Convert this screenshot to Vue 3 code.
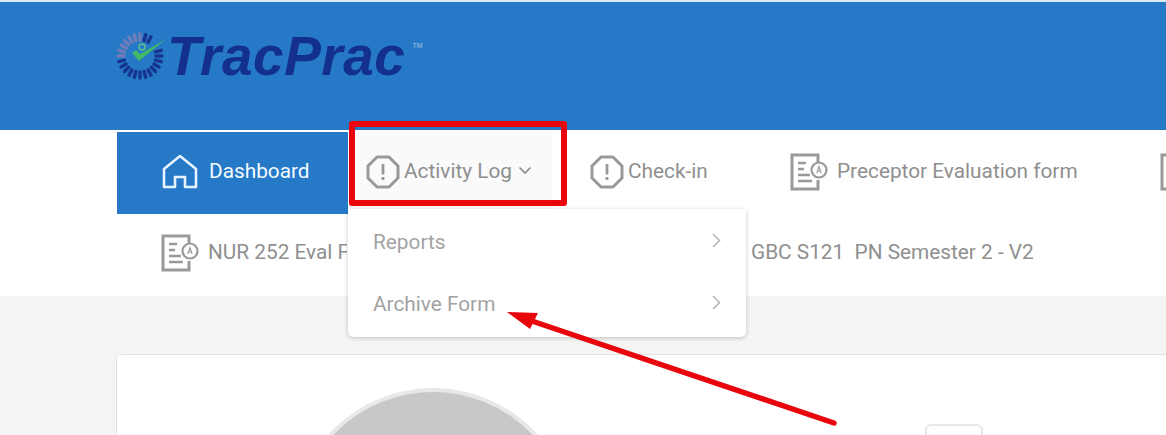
<script setup>
const ticks = Array.from({ length: 24 }, (_, i) => {
  const a = (i * 15 * Math.PI) / 180
  return {
    i,
    x1: 24 + Math.cos(a) * 16,
    y1: 24 + Math.sin(a) * 16,
    x2: 24 + Math.cos(a) * 22,
    y2: 24 + Math.sin(a) * 22,
    // upper left part of the ring fades out
    color: i >= 12 && i <= 18 ? '#6f7cb8' : '#16358f',
  }
}).filter((t) => t.i !== 21 && t.i !== 22)
</script>

<template>
  <div class="page">
    <header class="topbar">
      <div class="logo">
        <svg class="logo-mark" width="48" height="48" viewBox="0 0 48 48">
          <line
            v-for="t in ticks"
            :key="t.i"
            :x1="t.x1"
            :y1="t.y1"
            :x2="t.x2"
            :y2="t.y2"
            :stroke="t.color"
            stroke-width="3.4"
            stroke-linecap="round"
          />
          <circle cx="26" cy="15" r="3" fill="none" stroke="#5fc08a" stroke-width="1.5" />
          <path d="M16 21 L23 29 L50 7 L24 22 L20 18 Z" fill="#3fb86a" />
        </svg>
        <span class="logo-text">TracPrac</span>
        <span class="logo-tm">TM</span>
      </div>
    </header>

    <nav class="nav">
      <div class="nav-row">
        <a class="item item-dash">
          <svg width="36" height="36" viewBox="0 0 36 36" fill="none" stroke="#e6f4ff" stroke-width="2.6" stroke-linejoin="round">
            <path d="M2 15 L18 2 L34 15 V33 H23 V23 H13 V33 H2 Z" />
          </svg>
          <span>Dashboard</span>
        </a>
        <a class="item item-activity">
          <svg class="alert" width="34" height="34" viewBox="0 0 34 34">
            <path d="M11 2 H23 L32 11 V23 L23 32 H11 L2 23 V11 Z" fill="none" stroke="#999" stroke-width="3" stroke-linejoin="round" />
            <rect x="15.6" y="9" width="2.8" height="10.5" fill="#999" />
            <rect x="15.6" y="22" width="2.8" height="3" fill="#999" />
          </svg>
          <span>Activity Log</span>
          <svg class="caret" width="14" height="9" viewBox="0 0 14 9" fill="none" stroke="#8a8a8a" stroke-width="1.6">
            <path d="M1.5 1.5 L7 7 L12.5 1.5" />
          </svg>
        </a>
        <a class="item item-check">
          <svg class="alert" width="34" height="34" viewBox="0 0 34 34">
            <path d="M11 2 H23 L32 11 V23 L23 32 H11 L2 23 V11 Z" fill="none" stroke="#999" stroke-width="3" stroke-linejoin="round" />
            <rect x="15.6" y="9" width="2.8" height="10.5" fill="#999" />
            <rect x="15.6" y="22" width="2.8" height="3" fill="#999" />
          </svg>
          <span>Check-in</span>
        </a>
        <a class="item item-preceptor">
          <svg class="form-icon" width="38" height="38" viewBox="0 0 38 38" fill="none" stroke="#999">
            <path d="M28 9 V2 H2 V36 H28 V27" stroke-width="3" />
            <path d="M8 10 H16 M8 16 H14 M8 22 H20 M8 28 H22" stroke-width="2.6" />
            <circle cx="29" cy="17" r="7.5" stroke-width="2.2" />
            <path d="M26.8 20 L29 13.5 L31.2 20 M27.6 18 H30.4" stroke-width="1.1" />
          </svg>
          <span>Preceptor Evaluation form</span>
        </a>
        <a class="item item-cut">
          <svg class="form-icon" width="38" height="38" viewBox="0 0 38 38" fill="none" stroke="#999">
            <path d="M28 9 V2 H2 V36 H28 V27" stroke-width="3" />
          </svg>
        </a>
      </div>
      <div class="nav-row nav-row-2">
        <a class="item item-nur">
          <svg class="form-icon" width="38" height="38" viewBox="0 0 38 38" fill="none" stroke="#999">
            <path d="M28 9 V2 H2 V36 H28 V27" stroke-width="3" />
            <path d="M8 10 H16 M8 16 H14 M8 22 H20 M8 28 H22" stroke-width="2.6" />
            <circle cx="29" cy="17" r="7.5" stroke-width="2.2" />
            <path d="M26.8 20 L29 13.5 L31.2 20 M27.6 18 H30.4" stroke-width="1.1" />
          </svg>
          <span class="nur-label">NUR 252 Eval Form</span>
        </a>
        <a class="item item-gbc">
          <span>GBC S121&nbsp; PN Semester 2 - V2</span>
        </a>
      </div>
    </nav>

    <main class="content">
      <section class="card">
        <div class="avatar"></div>
        <div class="small-btn"></div>
      </section>
    </main>

    <div class="dropdown">
      <div class="drop-item">
        <span>Reports</span>
        <svg width="9" height="15" viewBox="0 0 9 15" fill="none" stroke="#b5b5b5" stroke-width="1.6">
          <path d="M1 1 L7.5 7.5 L1 14" />
        </svg>
      </div>
      <div class="drop-item">
        <span>Archive Form</span>
        <svg width="9" height="15" viewBox="0 0 9 15" fill="none" stroke="#b5b5b5" stroke-width="1.6">
          <path d="M1 1 L7.5 7.5 L1 14" />
        </svg>
      </div>
    </div>

    <!-- annotations drawn over the screenshot -->
    <div class="mark-box"></div>
    <svg class="mark-arrow" width="1166" height="435" viewBox="0 0 1166 435">
      <line x1="526" y1="319" x2="834" y2="423" stroke="#e8060c" stroke-width="5.5" stroke-linecap="round" />
      <path d="M507 312 L538 313 L530 329 Z" fill="#e8060c" />
    </svg>
  </div>
</template>

<style scoped>
.page {
  position: relative;
  width: 1166px;
  height: 435px;
  overflow: hidden;
  background: #f4f4f4;
  font-family: Roboto, "Liberation Sans", sans-serif;
}
.topbar {
  height: 128px;
  margin-top: 2px;
  background: #2679c6;
  display: flex;
  padding-left: 116px;
  box-shadow: 0 -2px 0 #dbe9f5;
}
.logo {
  display: flex;
  align-items: flex-start;
  padding-top: 26px;
}
.logo-mark {
  flex: none;
  margin: 4px 3px 0 0;
  overflow: visible;
}
.logo-text {
  font-family: "Liberation Sans", Arial, sans-serif;
  font-weight: 700;
  font-style: italic;
  font-size: 55px;
  line-height: 56px;
  letter-spacing: 0.5px;
  color: #14308f;
}
.logo-tm {
  font-family: "Liberation Sans", Arial, sans-serif;
  font-size: 7px;
  color: #a9c4e2;
  margin: 14px 0 0 7px;
}
.nav {
  background: #fff;
  padding-top: 2px;
  height: 164px;
}
.nav-row {
  display: flex;
  height: 82px;
  overflow: hidden;
}
.item {
  display: flex;
  align-items: center;
  flex: none;
  box-sizing: border-box;
  height: 82px;
  padding-bottom: 2px;
  font-size: 20.8px;
  color: #8f8f8f;
  white-space: nowrap;
}
.item span {
  margin-bottom: 2px;
}
.nav-row-2 .item {
  padding-bottom: 4px;
}
.item-dash {
  width: 231px;
  margin-left: 117px;
  padding-left: 45px;
  background: #2679c6;
  color: #f2fbff;
  gap: 11px;
}
.item-activity {
  width: 204px;
  padding-left: 18px;
  background: #fafafa;
}
.item-activity .alert {
  margin-right: 4px;
}
.caret {
  margin: 0 0 4px 6px;
}
.item-check {
  margin-left: 38px;
  width: 200px;
}
.item-check .alert {
  margin-right: 4px;
}
.item-preceptor {
  width: 370px;
}
.form-icon {
  flex: none;
  margin-right: 9px;
}
.item-cut {
  width: 40px;
}
.item-nur {
  margin-left: 161px;
  width: 590px;
}
/* cut off where the open menu covers it */
.nur-label {
  width: 139px;
  overflow: hidden;
}
.content {
  padding: 58px 0 0 116px;
}
.card {
  display: flex;
  align-items: flex-start;
  width: 1100px;
  height: 200px;
  padding: 33px 0 0 175px;
  background: #fff;
  border: 1px solid #e2e2e2;
  border-radius: 5px;
}
.avatar {
  flex: none;
  width: 274px;
  height: 274px;
  border-radius: 50%;
  border: 4px solid #e8e8e8;
  background: #c8c8c8;
}
.small-btn {
  flex: none;
  width: 54px;
  height: 40px;
  margin: 36px 0 0 351px;
  border: 2px solid #e8e8e8;
  border-radius: 6px;
  background: #fff;
}
.dropdown {
  position: absolute;
  left: 348px;
  top: 209px;
  width: 398px;
  height: 128px;
  padding-top: 2px;
  box-sizing: border-box;
  background: #fff;
  border-radius: 0 0 5px 5px;
  box-shadow: 0 1px 4px rgba(0, 0, 0, 0.22);
}
.drop-item {
  display: flex;
  align-items: center;
  justify-content: space-between;
  height: 62px;
  padding: 0 25px;
  font-size: 20.8px;
  color: #a3a3a3;
}
.drop-item svg {
  margin-top: -4px;
}
.mark-box {
  position: absolute;
  left: 349px;
  top: 121px;
  width: 218px;
  height: 85px;
  box-sizing: border-box;
  border: 6px solid #e8060c;
  border-radius: 3px;
}
.mark-arrow {
  position: absolute;
  left: 0;
  top: 0;
}
</style>
